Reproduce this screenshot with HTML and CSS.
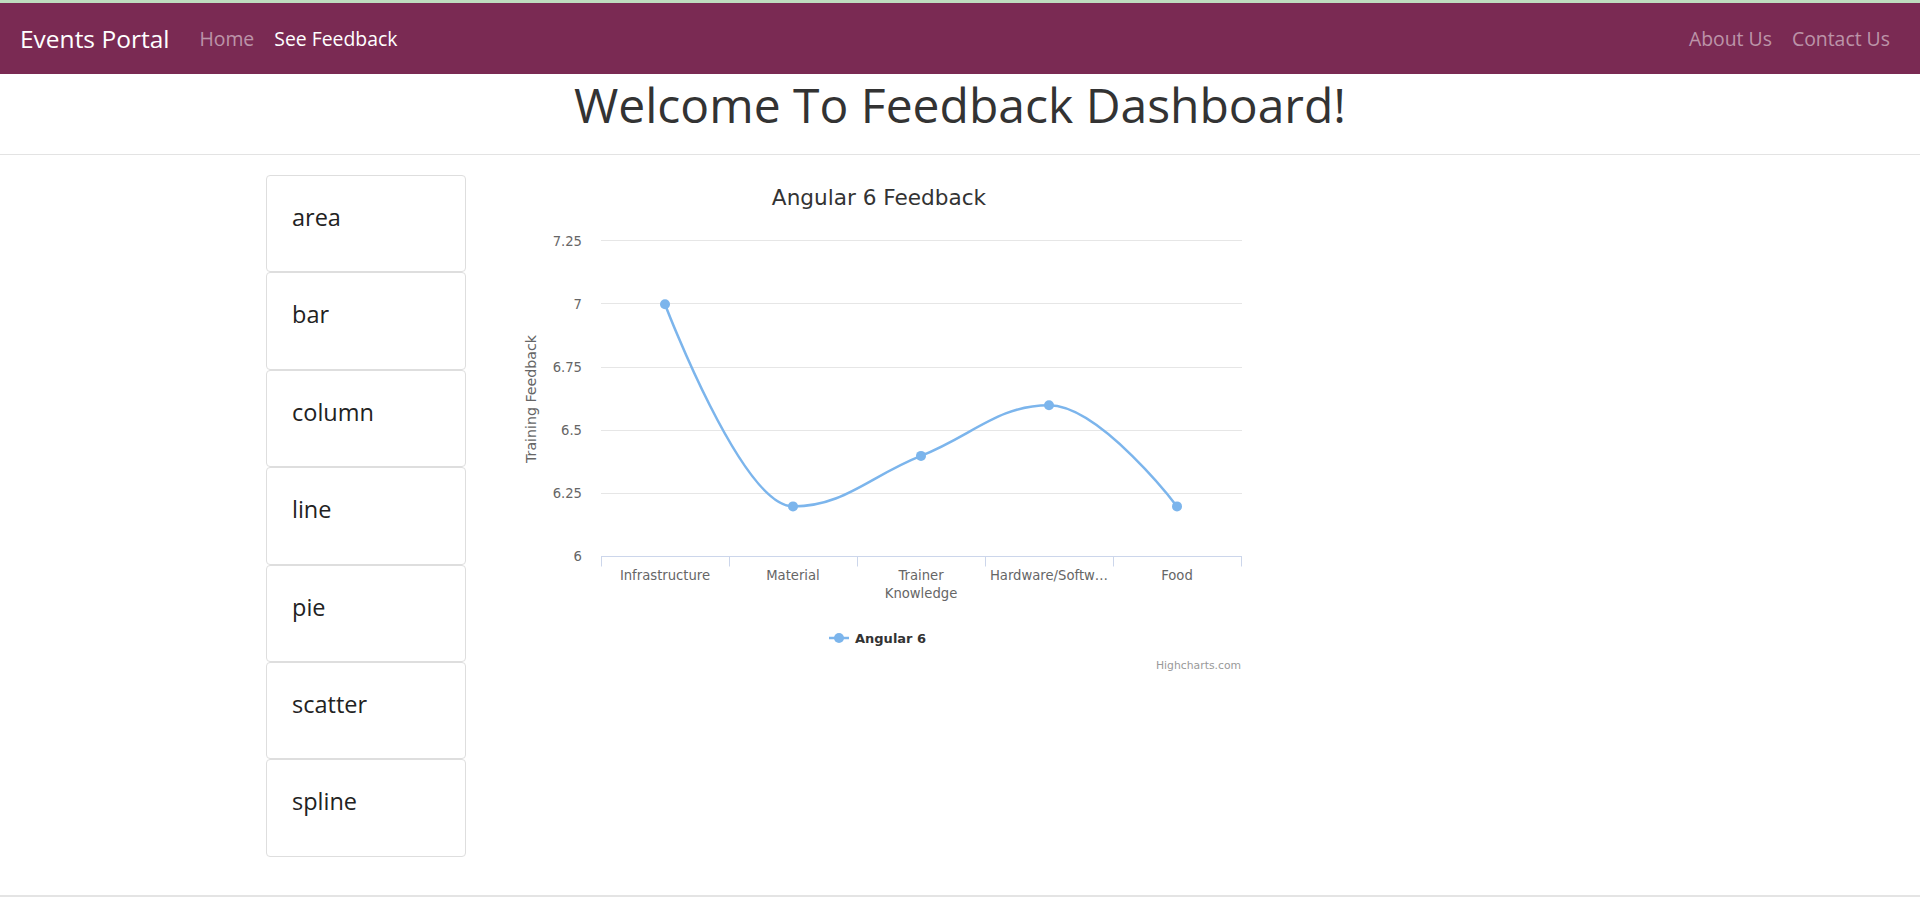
FILE: index.html
```html
<!DOCTYPE html>
<html lang="en">
<head>
<meta charset="utf-8">
<title>Events Portal - Feedback Dashboard</title>
<link rel="stylesheet" href="styles.css">
</head>
<body>
<div class="topbar"></div>
<nav class="navbar">
  <a class="brand" href="#">Events Portal</a>
  <ul class="nav">
    <li><a class="nav-link" href="#">Home</a></li>
    <li><a class="nav-link active" href="#">See Feedback</a></li>
  </ul>
  <ul class="nav nav-right">
    <li><a class="nav-link" href="#">About Us</a></li>
    <li><a class="nav-link" href="#">Contact Us</a></li>
  </ul>
</nav>
<header class="hero">
  <h1 class="hero-title">Welcome To Feedback Dashboard!</h1>
</header>
<main class="main">
  <div class="types">
    <div class="type-item">area</div>
    <div class="type-item">bar</div>
    <div class="type-item">column</div>
    <div class="type-item">line</div>
    <div class="type-item">pie</div>
    <div class="type-item">scatter</div>
    <div class="type-item">spline</div>
  </div>
  <div class="chart">
    <svg class="chart-svg" width="760" height="520" viewBox="500 175 760 520" xmlns="http://www.w3.org/2000/svg">
      <text class="c-title" x="879" y="205" text-anchor="middle">Angular 6 Feedback</text>
      <g class="grid">
        <line x1="601" y1="240.5" x2="1242" y2="240.5"/>
        <line x1="601" y1="303.5" x2="1242" y2="303.5"/>
        <line x1="601" y1="367.5" x2="1242" y2="367.5"/>
        <line x1="601" y1="430.5" x2="1242" y2="430.5"/>
        <line x1="601" y1="493.5" x2="1242" y2="493.5"/>
      </g>
      <g class="axis">
        <line x1="601" y1="556.5" x2="1242" y2="556.5"/>
        <line x1="601.5" y1="556.5" x2="601.5" y2="566.5"/>
        <line x1="729.5" y1="556.5" x2="729.5" y2="566.5"/>
        <line x1="857.5" y1="556.5" x2="857.5" y2="566.5"/>
        <line x1="985.5" y1="556.5" x2="985.5" y2="566.5"/>
        <line x1="1113.5" y1="556.5" x2="1113.5" y2="566.5"/>
        <line x1="1241.5" y1="556.5" x2="1241.5" y2="566.5"/>
      </g>
      <g class="ylabels">
        <text x="582" y="246" text-anchor="end">7.25</text>
        <text x="582" y="309" text-anchor="end">7</text>
        <text x="582" y="372" text-anchor="end">6.75</text>
        <text x="582" y="435" text-anchor="end">6.5</text>
        <text x="582" y="498" text-anchor="end">6.25</text>
        <text x="582" y="561" text-anchor="end">6</text>
      </g>
      <text class="ytitle" x="536" y="399" text-anchor="middle" transform="rotate(-90 536 399)">Training Feedback</text>
      <g class="xlabels">
        <text x="665" y="580" text-anchor="middle">Infrastructure</text>
        <text x="793" y="580" text-anchor="middle">Material</text>
        <text x="921" y="580" text-anchor="middle">Trainer</text>
        <text x="921" y="598" text-anchor="middle">Knowledge</text>
        <text x="1049" y="580" text-anchor="middle">Hardware/Softw…</text>
        <text x="1177" y="580" text-anchor="middle">Food</text>
      </g>
      <path class="series" d="M 665 304.2 C 665 304.2 741.8 506.4 793 506.4 C 844.2 506.4 869.8 476.1 921 455.9 C 972.2 435.7 997.8 405.3 1049 405.3 C 1100.2 405.3 1177 506.4 1177 506.4"/>
      <g class="markers">
        <circle cx="665" cy="304.2" r="5"/>
        <circle cx="793" cy="506.4" r="5"/>
        <circle cx="921" cy="455.9" r="5"/>
        <circle cx="1049" cy="405.3" r="5"/>
        <circle cx="1177" cy="506.4" r="5"/>
      </g>
      <g class="legend">
        <line class="legend-line" x1="829" y1="638" x2="849" y2="638"/>
        <circle class="legend-dot" cx="839" cy="638" r="5"/>
        <text class="legend-text" x="855" y="643">Angular 6</text>
      </g>
      <text class="credits" x="1241" y="669" text-anchor="end">Highcharts.com</text>
    </svg>
  </div>
</main>
<div class="footer"></div>
</body>
</html>
```

FILE: styles.css
```css
* { box-sizing: border-box; }

html, body {
  margin: 0;
  padding: 0;
  background: #ffffff;
  font-family: "Open Sans", "Noto Sans", sans-serif;
  color: #333333;
}

body {
  width: 1920px;
  height: 897px;
  overflow: hidden;
}

.topbar {
  height: 3px;
  background: #bfdcbf;
}

.navbar {
  display: flex;
  align-items: center;
  height: 71px;
  padding: 0 20px;
  background: #7a2a53;
}

.brand {
  font-size: 24.5px;
  color: #ffffff;
  text-decoration: none;
  margin-right: 20px;
  line-height: 1;
  position: relative;
  top: 1px;
}

.nav {
  display: flex;
  list-style: none;
  margin: 0;
  padding: 0;
}

.nav-right {
  margin-left: auto;
}

.nav-link {
  display: block;
  padding: 0 10px;
  font-size: 19.4px;
  line-height: 1;
  color: rgba(255, 255, 255, 0.5);
  text-decoration: none;
}

.nav-link.active {
  color: #ffffff;
}

.hero {
  height: 81px;
  border-bottom: 1px solid #e3e3e3;
  padding-top: 7px;
  text-align: center;
}

.hero-title {
  margin: 0;
  font-size: 48px;
  font-weight: 400;
  line-height: 1;
  color: #333333;
}

.main {
  display: flex;
  align-items: flex-start;
  gap: 34px;
  padding: 20px 0 38px 266px;
}

.types {
  width: 200px;
  display: flex;
  flex-direction: column;
}

.type-item {
  height: 97.4px;
  border: 1px solid #dedede;
  border-radius: 4px;
  padding: 24px 25px 0;
  font-size: 23.5px;
  line-height: 1.5;
  color: #222222;
}

.chart {
  width: 760px;
  height: 520px;
}

.chart-svg {
  display: block;
  font-family: "DejaVu Sans", sans-serif;
}

.c-title {
  font-size: 21.6px;
  fill: #333333;
}

.grid line {
  stroke: #e6e6e6;
  stroke-width: 1;
}

.axis line {
  stroke: #ccd6eb;
  stroke-width: 1;
}

.ylabels text,
.xlabels text {
  font-size: 13.2px;
  fill: #666666;
}

.ytitle {
  font-size: 14.2px;
  fill: #666666;
}

.series {
  fill: none;
  stroke: #7cb5ec;
  stroke-width: 2.5;
}

.markers circle,
.legend-dot {
  fill: #7cb5ec;
}

.legend-line {
  stroke: #7cb5ec;
  stroke-width: 2.5;
}

.legend-text {
  font-size: 13px;
  font-weight: 700;
  fill: #333333;
}

.credits {
  font-size: 10.8px;
  fill: #999999;
}

.footer {
  height: 2px;
  background: #e4e4e4;
}
```
